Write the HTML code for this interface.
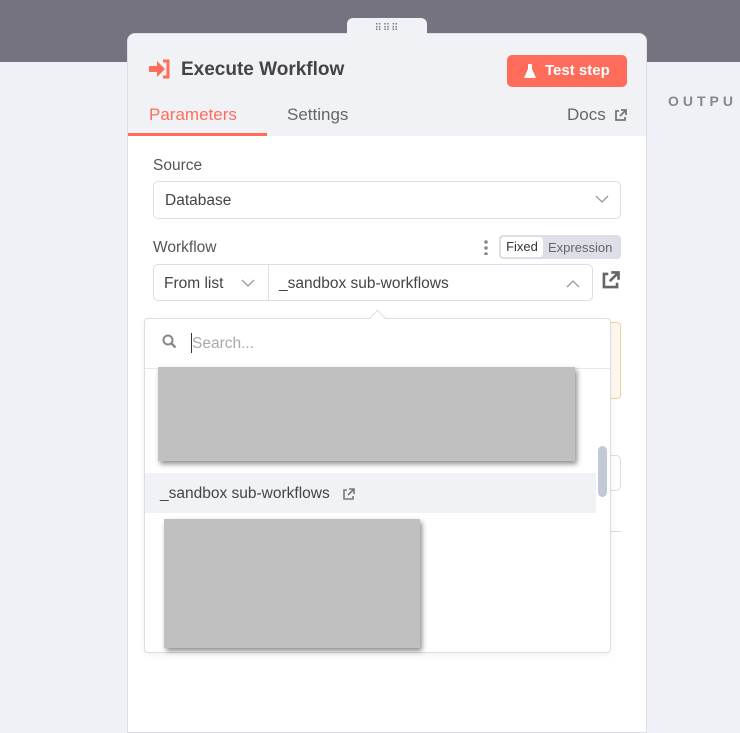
<!DOCTYPE html>
<html><head><style>
*{box-sizing:border-box;margin:0;padding:0}
body{width:740px;height:718px;overflow:hidden;background:#f0f1f6;font-family:"Liberation Sans",sans-serif;position:relative;color:#555}
.top{position:absolute;left:0;top:0;width:740px;height:62px;background:#75737f}
.handle{position:absolute;left:347px;top:18px;width:80px;height:24px;background:#f1f2f6;border-radius:6px 6px 0 0;text-align:center;color:#777;font-size:10px;letter-spacing:1px;line-height:22px}
.panel{position:absolute;left:127px;top:33px;width:520px;height:700px;background:#fff;border:1px solid #dcdde5;border-radius:8px 8px 0 0;overflow:hidden}
.hdr{position:absolute;left:0;top:0;width:100%;height:102px;background:#f1f2f6}
.abs{position:absolute}
.title{left:53px;top:25px;font-size:19px;color:#444;font-weight:bold}
.btn{left:379px;top:21px;width:120px;height:32px;background:#ff6d5a;border-radius:5px;color:#fff;font-weight:bold;font-size:15px;line-height:32px;padding-left:38px}
.tab{top:71px;font-size:17px}
.lbl{font-size:15.5px;color:#555}
.inp{border:1px solid #dcdee6;border-radius:5px;background:#fff}
.out{left:668px;top:93px;font-size:14px;letter-spacing:4px;color:#888;font-weight:bold}
</style></head><body>
<div class="top"></div>
<div class="abs out">OUTPU</div>
<div class="panel">
 <div class="hdr"></div>
 <svg class="abs" style="left:20px;top:25px" width="24" height="20" viewBox="0 0 24 20"><path d="M1 7h8V2l8 8-8 8v-5H1z" fill="#ff6d5a"/><path d="M15 2h5v16h-5" fill="none" stroke="#ff6d5a" stroke-width="3"/></svg>
 <div class="abs title">Execute Workflow</div>
 <div class="abs btn">Test step</div>
 <svg class="abs" style="left:395px;top:29px" width="14" height="16" viewBox="0 0 14 16"><path d="M4 1h6M5 1v5L1 15h12L9 6V1" fill="#fff"/></svg>
 <div class="abs tab" style="left:21px;color:#ff6d5a">Parameters</div>
 <div class="abs" style="left:0;top:99px;width:139px;height:3px;background:#ff6d5a"></div>
 <div class="abs tab" style="left:159px;color:#666">Settings</div>
 <div class="abs tab" style="left:439px;color:#666">Docs</div>
 <svg class="abs" style="left:486px;top:75px" width="13" height="13" viewBox="0 0 13 13"><path d="M5 2H2v9h9V8M7 1h5v5M12 1L6 7" fill="none" stroke="#777" stroke-width="1.8"/></svg>
 <div class="abs lbl" style="left:25px;top:123px">Source</div>
 <div class="abs inp" style="left:25px;top:147px;width:468px;height:38px"></div>
 <div class="abs lbl" style="left:37px;top:158px;color:#444">Database</div>
 <svg class="abs" style="left:467px;top:161px" width="14" height="9"><path d="M1 1l6 6 6-6" fill="none" stroke="#999" stroke-width="1.3"/></svg>
 <div class="abs lbl" style="left:25px;top:205px">Workflow</div>
 <div class="abs" style="left:356px;top:205px;width:4px;height:16px;background:radial-gradient(circle,#888 1.6px,transparent 2px) 0 0/4px 6px"></div>
 <div class="abs" style="left:371px;top:201px;width:122px;height:24px;background:#dcdfe8;border-radius:4px"></div>
 <div class="abs" style="left:373px;top:203px;width:42px;height:20px;background:#fff;border-radius:3px;font-size:13px;line-height:20px;text-align:center;color:#333">Fixed</div>
 <div class="abs" style="left:420px;top:206px;font-size:13px;color:#666">Expression</div>
 <div class="abs inp" style="left:25px;top:230px;width:440px;height:37px"></div>
 <div class="abs" style="left:140px;top:231px;width:1px;height:35px;background:#dcdee6"></div>
 <div class="abs lbl" style="left:36px;top:241px;color:#444">From list</div>
 <svg class="abs" style="left:113px;top:245px" width="14" height="9"><path d="M1 1l6 6 6-6" fill="none" stroke="#999" stroke-width="1.3"/></svg>
 <div class="abs lbl" style="left:151px;top:241px;color:#444">_sandbox sub-workflows</div>
 <svg class="abs" style="left:438px;top:245px" width="14" height="9"><path d="M1 8l6-6 6 6" fill="none" stroke="#999" stroke-width="1.3"/></svg>
 <svg class="abs" style="left:473px;top:237px" width="19" height="19" viewBox="0 0 13 13"><path d="M5 2H2v9h9V8M7 1h5v5M12 1L6 7" fill="none" stroke="#666" stroke-width="1.8"/></svg>
 <div class="abs" style="left:441px;top:288px;width:52px;height:77px;border:1px solid #f6cf95;background:#fff8ef;border-radius:4px"></div>
 <div class="abs inp" style="left:441px;top:421px;width:52px;height:36px"></div>
 <div class="abs" style="left:441px;top:497px;width:52px;height:1px;background:#dcdee6"></div>
 <div class="abs" style="left:16px;top:284px;width:467px;height:335px;background:#fff;border:1px solid #dcdee6;border-radius:4px;box-shadow:0 2px 8px rgba(0,0,0,.06)"></div>
 <div class="abs" style="left:244px;top:278px;width:11px;height:11px;background:#fff;border-left:1px solid #dcdee6;border-top:1px solid #dcdee6;transform:rotate(45deg)"></div>
 <svg class="abs" style="left:34px;top:300px" width="15" height="15" viewBox="0 0 15 15"><circle cx="6" cy="6" r="4.5" fill="none" stroke="#888" stroke-width="2"/><path d="M9.5 9.5l4 4" stroke="#888" stroke-width="2.4"/></svg>
 <div class="abs" style="left:63px;top:299px;width:1px;height:20px;background:#333"></div>
 <div class="abs lbl" style="left:64px;top:301px;color:#aaa">Search...</div>
 <div class="abs" style="left:17px;top:334px;width:465px;height:1px;background:#e8e9ef"></div>
 <div class="abs" style="left:17px;top:439px;width:451px;height:40px;background:#f1f2f6"></div>
 <div class="abs lbl" style="left:32px;top:451px;color:#444">_sandbox sub-workflows</div>
 <svg class="abs" style="left:214px;top:454px" width="13" height="13" viewBox="0 0 13 13"><path d="M5 2H2v9h9V8M7 1h5v5M12 1L6 7" fill="none" stroke="#777" stroke-width="1.6"/></svg>
 <div class="abs" style="left:470px;top:412px;width:9px;height:51px;background:#c3c8d6;border-radius:5px"></div>
 <div class="abs" style="left:30px;top:333px;width:417px;height:94px;background:#c0c0c0;box-shadow:2px 3px 5px rgba(0,0,0,.45)"></div>
 <div class="abs" style="left:36px;top:485px;width:256px;height:129px;background:#c0c0c0;box-shadow:2px 3px 5px rgba(0,0,0,.45)"></div>
</div>
<div class="handle">⠿⠿⠿</div>
</body></html>
